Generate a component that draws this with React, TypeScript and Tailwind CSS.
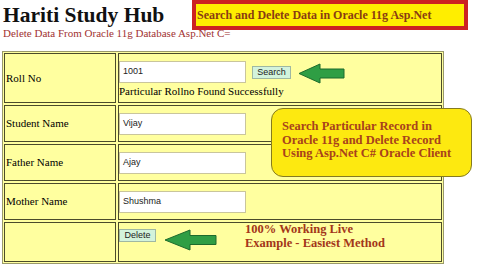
import React from "react";

const serif = { fontFamily: '"Liberation Serif", "Times New Roman", serif' };
const sans = { fontFamily: '"Liberation Sans", Arial, sans-serif' };

function Arrow({ w, h, base }: { w: number; h: number; base: number }) {
  const mid = h / 2;
  const s1 = mid - 4.5;
  const s2 = mid + 4.5;
  return (
    <svg width={w} height={h} viewBox={`0 0 ${w} ${h}`}>
      <path
        d={`M1 ${mid} L${base} 1 L${base} ${s1} L${w - 1} ${s1} L${w - 1} ${s2} L${base} ${s2} L${base} ${h - 1} Z`}
        fill="#2f9e44"
        stroke="#1d6b2c"
        strokeWidth="1"
        strokeLinejoin="miter"
      />
    </svg>
  );
}

function Field({ value }: { value: string }) {
  return (
    <div
      className="w-[127px] h-[22px] shrink-0 bg-white border border-[#c9c59c] flex items-center pl-[3px] text-[9px] text-[#222]"
      style={sans}
    >
      {value}
    </div>
  );
}

function Btn({ label, w }: { label: string; w: string }) {
  return (
    <div
      className={`${w} h-[13px] shrink-0 bg-[#d3f3dc] border border-[#9fb8a2] flex items-center justify-center text-[9px] text-[#222] leading-none`}
      style={sans}
    >
      {label}
    </div>
  );
}

function Label({ text }: { text: string }) {
  return (
    <div
      className="border border-[#4b4b2b] bg-[#ffff9f] flex items-center pl-[1px] text-[11px] text-black whitespace-nowrap"
      style={serif}
    >
      {text}
    </div>
  );
}

export default function App() {
  return (
    <div className="relative w-[480px] h-[270px] overflow-hidden bg-white">
      <div className="flex items-start h-[51px]">
        <div className="w-[192px] shrink-0 pl-[3px] pt-[3px]">
          <div className="text-[21.5px] leading-[24px] font-bold text-[#111] whitespace-nowrap" style={serif}>
            Hariti Study Hub
          </div>
          <div className="text-[11px] leading-[13px] text-[#a13232] whitespace-nowrap" style={serif}>
            Delete Data From Oracle 11g Database Asp.Net C=
          </div>
        </div>
        <div
          className="w-[276px] h-[30px] shrink-0 border-[4px] border-[#cc2222] bg-[#ffee00] flex items-center pl-[1px] text-[12px] font-bold text-[#8a3c12] whitespace-nowrap"
          style={serif}
        >
          Search and Delete Data in Oracle 11g Asp.Net
        </div>
      </div>

      <div className="ml-[2px] w-[442px] border border-[#9a9a6a] p-[1px] bg-[#ffff9f] grid grid-cols-[112px_324px] grid-rows-[50px_37px_37px_37px_40px] gap-[2px]">
        <Label text="Roll No" />
        <div className="border border-[#4b4b2b] bg-[#ffff9f] flex flex-col justify-center">
          <div className="flex items-center">
            <Field value="1001" />
            <div className="ml-[6px] mt-[1px]">
              <Btn label="Search" w="w-[39px]" />
            </div>
            <div className="ml-[7px] mt-[3px] flex">
              <Arrow w={47} h={21} base={22} />
            </div>
          </div>
          <div className="text-[11px] leading-[12px] mt-[1px] text-black whitespace-nowrap" style={serif}>
            Particular Rollno Found Successfully
          </div>
        </div>

        <Label text="Student Name" />
        <div className="border border-[#4b4b2b] bg-[#ffff9f] flex items-center">
          <Field value="Vijay" />
        </div>

        <Label text="Father Name" />
        <div className="border border-[#4b4b2b] bg-[#ffff9f] flex items-center">
          <Field value="Ajay" />
        </div>

        <Label text="Mother Name" />
        <div className="border border-[#4b4b2b] bg-[#ffff9f] flex items-center">
          <Field value="Shushma" />
        </div>

        <div className="border border-[#4b4b2b] bg-[#ffff9f]" />
        <div className="border border-[#4b4b2b] bg-[#ffff9f] flex items-start">
          <div className="mt-[6px]">
            <Btn label="Delete" w="w-[37px]" />
          </div>
          <div className="ml-[8px] mt-[6px] flex">
            <Arrow w={53} h={22} base={26} />
          </div>
          <div
            className="ml-[28px] text-[12.5px] leading-[13.5px] font-bold text-[#a3361a] whitespace-nowrap"
            style={serif}
          >
            <div>100% Working Live</div>
            <div>Example - Easiest Method</div>
          </div>
        </div>
      </div>

      <div
        className="absolute left-[271px] top-[108px] w-[201px] h-[69px] rounded-[12px] border border-[#857a20] bg-[#fde910] pl-[10px] pt-[11px] text-[12.5px] leading-[13.5px] font-bold text-[#a8421c] whitespace-nowrap"
        style={serif}
      >
        <div>Search Particular Record in</div>
        <div>Oracle 11g and Delete Record</div>
        <div>Using Asp.Net C# Oracle Client</div>
      </div>
    </div>
  );
}
